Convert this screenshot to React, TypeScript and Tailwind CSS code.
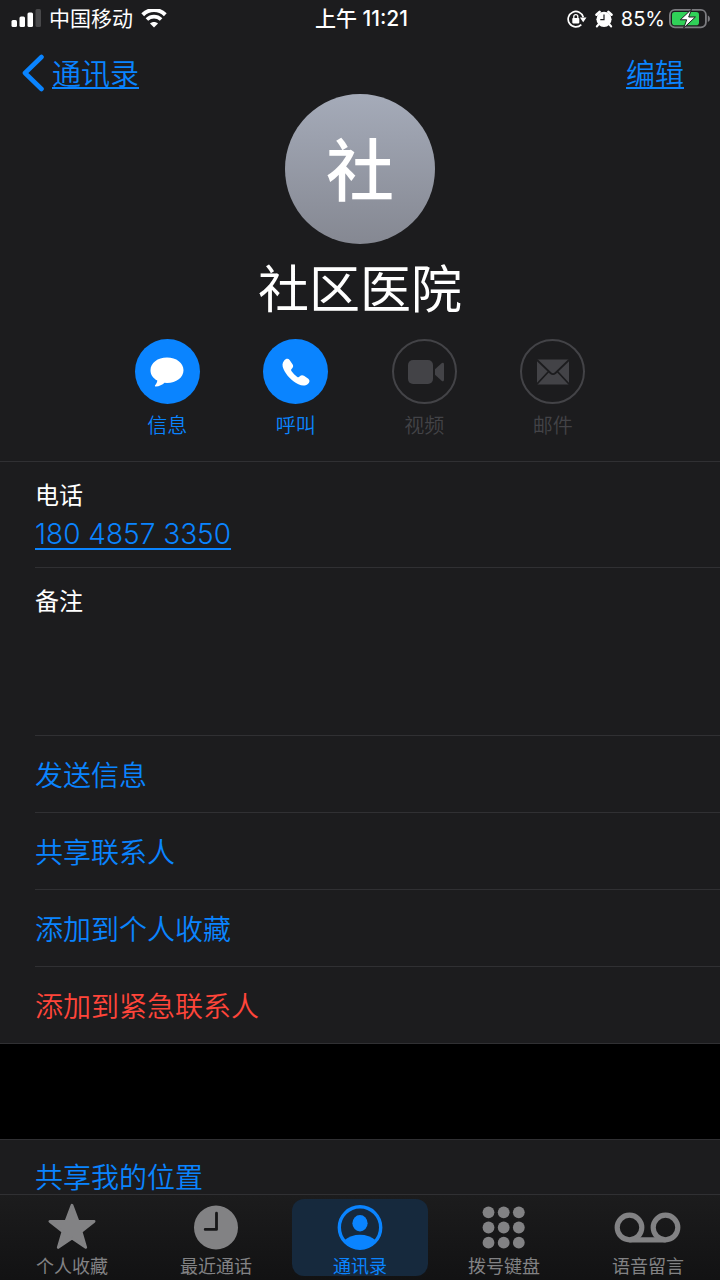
import type { ReactNode } from "react";

const actions = [
  { label: "信息", icon: <BubbleIcon />, enabled: true },
  { label: "呼叫", icon: <PhoneIcon />, enabled: true },
  { label: "视频", icon: <VideoIcon />, enabled: false },
  { label: "邮件", icon: <MailIcon />, enabled: false },
];

const rows = [
  { label: "发送信息", danger: false },
  { label: "共享联系人", danger: false },
  { label: "添加到个人收藏", danger: false },
  { label: "添加到紧急联系人", danger: true },
];

const tabs = [
  { label: "个人收藏", icon: <StarIcon />, active: false },
  { label: "最近通话", icon: <ClockIcon />, active: false },
  { label: "通讯录", icon: <PersonIcon />, active: true },
  { label: "拨号键盘", icon: <KeypadIcon />, active: false },
  { label: "语音留言", icon: <VoicemailIcon />, active: false },
];

function BubbleIcon() {
  return (
    <svg viewBox="0 0 36 34" className="w-9" fill="currentColor" aria-hidden="true">
      <path d="M18 2.500C8.600 2.500 1.500 8 1.500 15.200c0 4.500 2.600 8 6.800 10.300-.2 2-1 3.400-2.200 4.700-.5.700-.1 1.300.8 1.300 3.300-.1 6.500-1.600 8.600-3.700l2.500.1c9.400 0 16.500-5.500 16.500-12.700S27.400 2.500 18 2.500z" />
    </svg>
  );
}

function PhoneIcon() {
  return (
    <svg viewBox="0 0 30 30" className="w-[30px]" fill="currentColor" aria-hidden="true">
      <path d="M3.200 3.400C4.800 1.500 7.300 1.200 8.600 3l2.900 4.300c1 1.500.8 3-.5 4.200-1.200 1.100-1.100 1.700-.4 2.800 1.500 2.200 3.300 4 5.400 5.400 1.100.7 1.700.8 2.800-.4 1.200-1.300 2.700-1.500 4.200-.5l4.300 2.900c1.800 1.300 1.500 3.600-.4 5.200-2.500 2.100-5.600 2.300-9.500.4-3.200-1.500-6.200-3.800-8.900-6.500S4 15.300 2.600 12.300c-1.600-3.600-1.500-6.500.6-8.900z" />
    </svg>
  );
}

function VideoIcon() {
  return (
    <svg viewBox="0 0 38 26" className="ml-1 w-[38px]" fill="currentColor" aria-hidden="true">
      <rect x="1" y="1" width="25" height="24" rx="5" />
      <path d="M28 10.300 34.600 4.200c1.100-1 2.400-.5 2.400 1v15.600c0 1.500-1.300 2-2.400 1L28 15.700z" />
    </svg>
  );
}

function MailIcon() {
  return (
    <svg viewBox="0 0 32 26" className="w-8" aria-hidden="true">
      <rect x="0" y="0.500" width="32" height="25" rx="1" fill="currentColor" />
      <path
        d="M0 1l13.500 13c1.600 1.500 3.400 1.500 5 0L32 1M0 25l11.600-12.500M32 25L20.400 12.500"
        fill="none"
        stroke="#1c1c1e"
        strokeWidth="1.800"
      />
    </svg>
  );
}

function StarIcon() {
  return (
    <svg viewBox="0 0 48 48" className="size-12" fill="currentColor" aria-hidden="true">
      <path
        d="M24 2.200l5.900 15.900 16.200.2-13 10.300 4.600 15.800L24 35.200 10.300 44.400l4.600-15.800L1.900 18.300l16.200-.2z"
        stroke="currentColor"
        strokeWidth="2.800"
        strokeLinejoin="round"
      />
    </svg>
  );
}

function ClockIcon() {
  return (
    <svg viewBox="0 0 48 48" className="size-12" aria-hidden="true">
      <circle cx="24" cy="24.500" r="22" fill="currentColor" />
      <path
        d="M24.500 10.200v16.200H13.200"
        fill="none"
        stroke="#171718"
        strokeWidth="2.800"
        strokeLinecap="round"
        strokeLinejoin="round"
      />
    </svg>
  );
}

function PersonIcon() {
  return (
    <svg viewBox="0 0 48 48" className="size-12" aria-hidden="true">
      <circle cx="24" cy="24.500" r="20.700" fill="none" stroke="currentColor" strokeWidth="3.400" />
      <ellipse cx="24" cy="20.200" rx="7.600" ry="8.200" fill="currentColor" />
      <path
        d="M8 37.500c4.500-3.800 10-5.700 16-5.700s11.500 1.900 16 5.700c-4 5.200-9.700 8.200-16 8.200s-12-3-16-8.200z"
        fill="currentColor"
      />
    </svg>
  );
}

function KeypadIcon() {
  return (
    <svg viewBox="0 0 48 48" className="size-12" fill="currentColor" aria-hidden="true">
      {[9.3, 24.500, 39.7].map((y) =>
        [8.500, 23.700, 38.8].map((x) => <circle key={`${x}-${y}`} cx={x} cy={y} r="5.900" />)
      )}
    </svg>
  );
}

function VoicemailIcon() {
  return (
    <svg
      viewBox="0 0 68 48"
      className="h-12 w-[68px]"
      fill="none"
      stroke="currentColor"
      strokeWidth="5.200"
      aria-hidden="true"
    >
      <circle cx="15.500" cy="24.500" r="12.300" />
      <circle cx="51.500" cy="24.500" r="12.300" />
      <path d="M15.500 36.800h36" />
    </svg>
  );
}

function SignalIcon() {
  return (
    <svg viewBox="0 0 30 20" className="w-[30px]" fill="currentColor" aria-hidden="true">
      <rect x="0.500" y="11" width="5.500" height="7" rx="1.500" />
      <rect x="8.500" y="7.500" width="5.500" height="10.500" rx="1.500" />
      <rect x="16.500" y="3.500" width="5.500" height="14.500" rx="1.500" />
      <rect x="24.500" y="0" width="5.500" height="18" rx="1.500" fill="#48484a" />
    </svg>
  );
}

function WifiIcon() {
  return (
    <svg viewBox="0 0 26 20" className="w-[26px]" fill="none" aria-hidden="true">
      <path d="M1.700 5.700c6.500-6.300 16.100-6.300 22.600 0" stroke="currentColor" strokeWidth="4" />
      <path d="M5.900 10.500c4.200-3.900 10-3.900 14.200 0" stroke="currentColor" strokeWidth="3.700" />
      <path d="M13 18.500l-4-4.100c2.300-2 5.700-2 8 0z" fill="currentColor" />
    </svg>
  );
}

function RotationLockIcon() {
  return (
    <svg viewBox="0 0 20 18" className="w-5" fill="none" stroke="currentColor" aria-hidden="true">
      <path d="M14.300 14.600A7.700 7.700 0 1 1 16.300 7.200" strokeWidth="1.700" />
      <path d="M12.900 7.600h6.600l-3.300 4.600z" fill="currentColor" stroke="none" />
      <rect x="5.300" y="8" width="7" height="5.400" rx="0.800" fill="currentColor" stroke="none" />
      <path d="M6.800 8.500V6.600a2 2 0 0 1 4 0v1.900" strokeWidth="1.300" />
    </svg>
  );
}

function AlarmIcon() {
  return (
    <svg viewBox="0 0 18 18" className="w-[18px]" aria-hidden="true">
      <circle cx="9" cy="9.300" r="7.600" fill="currentColor" />
      <path
        d="M1.500 4.700 4.600 1.900M16.500 4.700 13.400 1.900"
        stroke="currentColor"
        strokeWidth="2.600"
        strokeLinecap="round"
      />
      <path d="M3.500 14.500l-1.700 2M14.500 14.500l1.700 2" stroke="currentColor" strokeWidth="2" strokeLinecap="round" />
      <path d="M9 4.600v5H5.300" fill="none" stroke="#1c1c1e" strokeWidth="1.200" />
    </svg>
  );
}

function BatteryIcon() {
  return (
    <svg viewBox="0 0 43 20" className="w-[43px]" aria-hidden="true">
      <rect x="0.900" y="0.900" width="36" height="17.400" rx="5" fill="none" stroke="#7c7c80" strokeWidth="1.800" />
      <path d="M38.800 6.400c2.800.8 2.800 5.600 0 6.400z" fill="#7c7c80" />
      <rect x="3" y="3" width="27" height="13.200" rx="2.800" fill="#30d158" />
      <path
        d="M22.500 0.300 11.300 10.800h6.400l-3 8.200 11.700-11h-6.700z"
        fill="#fff"
        stroke="#1c1c1e"
        strokeWidth="1"
      />
    </svg>
  );
}

function StatusBar() {
  return (
    <div className="grid h-[37px] grid-cols-3 items-center pr-2 pl-[11px] text-[21px] leading-9">
      <div className="flex items-center gap-2">
        <SignalIcon />
        <span>中国移动</span>
        <WifiIcon />
      </div>
      <time className="text-center font-medium">上午 11:21</time>
      <div className="flex items-center justify-end gap-2">
        <RotationLockIcon />
        <AlarmIcon />
        <div className="flex items-center gap-1">
          <span className="text-xl">85%</span>
          <BatteryIcon />
        </div>
      </div>
    </div>
  );
}

function ActionButton({ label, icon, enabled }: { label: string; icon: ReactNode; enabled: boolean }) {
  return (
    <button
      type="button"
      disabled={!enabled}
      className={`flex flex-col items-center gap-2 ${enabled ? "text-[#0a84ff]" : "text-[#434347]"}`}
    >
      <span
        className={`flex size-[65px] items-center justify-center rounded-full ${
          enabled ? "bg-[#0a84ff] text-white" : "border-2 border-[#434347]"
        }`}
      >
        {icon}
      </span>
      <span className="text-xl leading-7 font-[350]">{label}</span>
    </button>
  );
}

export default function App() {
  return (
    <div className="flex h-dvh flex-col bg-[#1c1c1e] font-['Inter','Noto_Sans_CJK_SC',sans-serif] text-white">
      <header className="shrink-0">
        <StatusBar />
        <nav className="flex h-[57px] items-center justify-between pt-[15px] pr-9 pl-[22px] text-[29px] leading-10 font-[350] text-[#0a84ff]">
          <a href="#contacts" className="flex items-center gap-2">
            <svg viewBox="0 0 22 38" className="w-[22px]" fill="none" aria-hidden="true">
              <path
                d="M19.500 3 3 19l16.500 16"
                stroke="currentColor"
                strokeWidth="4.600"
                strokeLinecap="round"
                strokeLinejoin="round"
              />
            </svg>
            <span className="pt-1 underline decoration-2 underline-offset-2">通讯录</span>
          </a>
          <a href="#edit" className="pt-1 underline decoration-2 underline-offset-2">
            编辑
          </a>
        </nav>
      </header>

      <main className="min-h-0 flex-1 overflow-y-auto [scrollbar-width:none]">
        {/* contact card */}
        <section className="flex flex-col items-center border-b border-[#303033] pb-[21px]">
          <div className="flex size-[150px] items-center justify-center rounded-full bg-linear-to-b from-[#a5abb9] to-[#858892] pt-1 text-[68px] leading-none font-medium">
            社
          </div>
          <h1 className="mt-[15px] text-[51px] leading-[62px]">社区医院</h1>
          <div className="mt-[18px] grid w-full max-w-[514px] grid-cols-4">
            {actions.map((action) => (
              <ActionButton key={action.label} {...action} />
            ))}
          </div>
        </section>

        <div className="pl-[35px]">
          <section className="flex flex-col items-start border-b border-[#303033] pt-[18px] pb-[10px]">
            <h2 className="text-2xl leading-8">电话</h2>
            <a
              href="tel:18048573350"
              className="text-[28px] leading-[45px] font-light text-[#0a84ff] underline decoration-2 underline-offset-4"
            >
              180 4857 3350
            </a>
          </section>
          <section className="flex flex-col pt-[18px]">
            <label htmlFor="notes" className="text-2xl leading-8">
              备注
            </label>
            <textarea id="notes" className="h-[117px] resize-none bg-transparent text-2xl outline-none" />
          </section>
          {rows.map((row) => (
            <button
              key={row.label}
              type="button"
              className={`block h-[77px] w-full border-t border-[#303033] pt-[3px] text-left text-[28px] leading-7 font-[350] ${
                row.danger ? "text-[#ff453a]" : "text-[#0a84ff]"
              }`}
            >
              {row.label}
            </button>
          ))}
        </div>

        <div className="h-[97px] border-y border-[#303033] bg-black" />

        <button
          type="button"
          className="block h-[75px] w-full pl-[35px] text-left text-[28px] leading-7 font-[350] text-[#0a84ff]"
        >
          共享我的位置
        </button>
      </main>

      {/* tab bar */}
      <nav className="grid shrink-0 grid-cols-5 border-t border-[#303033] bg-linear-to-b from-[#1c1c1d] to-[#121213] py-1">
        {tabs.map((tab) => (
          <button
            key={tab.label}
            type="button"
            className={`mx-1 flex flex-col items-center gap-[7px] rounded-xl pt-1 ${
              tab.active ? "bg-[#16293d] text-[#0a84ff]" : "text-[#828284]"
            }`}
          >
            {tab.icon}
            <span className="text-lg leading-[18px]">{tab.label}</span>
          </button>
        ))}
      </nav>
    </div>
  );
}
